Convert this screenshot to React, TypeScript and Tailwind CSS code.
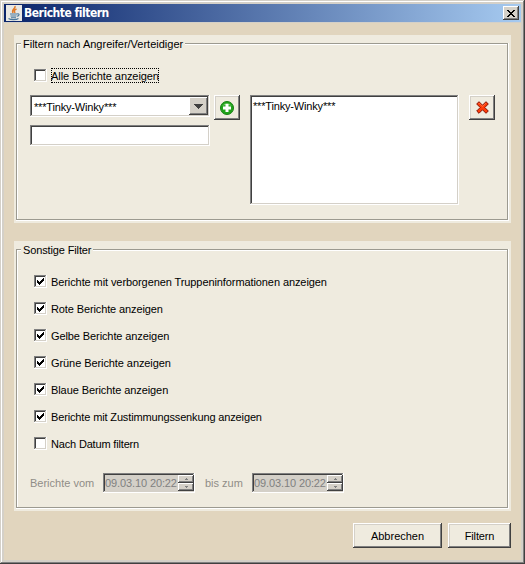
import React from "react";

const raised =
  "shadow-[inset_-1px_-1px_#404040,inset_1px_1px_#fff,inset_-2px_-2px_#808080,inset_2px_2px_#d4d0c8]";
const sunken =
  "shadow-[inset_-1px_-1px_#fff,inset_1px_1px_#808080,inset_-2px_-2px_#d4d0c8,inset_2px_2px_#404040]";

function Check({ label, checked, focus, tracking }: { label: string; checked?: boolean; focus?: boolean; tracking: string }) {
  return (
    <div className="flex h-[15px] items-center gap-1">
      <div className={`flex size-[13px] items-center justify-center bg-white ${sunken}`}>
        {checked && (
          <svg width="7" height="7" viewBox="0 0 7 7" shapeRendering="crispEdges">
            <path d="M0 2h1v1h1v1h1v-1h1v-1h1v-1h1v-1h1v3h-1v1h-1v1h-1v1h-1v1h-1v-1h-1v-1h-1z" />
          </svg>
        )}
      </div>
      <span
        className={`h-[15px] pt-px leading-[14px] ${tracking} ${
          focus ? "outline-1 -outline-offset-1 outline-black outline-dotted" : ""
        }`}
      >
        {label}
      </span>
    </div>
  );
}

function Group({ title, className, children }: { title: string; className: string; children: React.ReactNode }) {
  return (
    <section className={`ml-[10px] w-[497px] bg-[#efebdf] px-[2px] pb-[2px] pt-[2px] ${className}`}>
      <div className="relative h-full">
        <div className="absolute inset-x-0 bottom-0 top-[6px] border-b border-r border-white">
          <div className="h-full border border-[#9c9a90] shadow-[inset_1px_1px_#fff]" />
        </div>
        <div className="relative flex flex-col">
          <h2 className="ml-[5px] h-[14px] w-fit bg-[#efebdf] px-[2px] leading-[14px]">{title}</h2>
          {children}
        </div>
      </div>
    </section>
  );
}

function Arrow({ up }: { up?: boolean }) {
  return (
    <div className={`flex h-[8px] w-[16px] items-center justify-center bg-[#d4d0c8] ${raised}`}>
      <svg width="3" height="2" shapeRendering="crispEdges" fill="#808080">
        <path d={up ? "M1 0h1v1h1v1H0V1h1z" : "M0 0h3v1H2v1H1V1H0z"} />
      </svg>
    </div>
  );
}

function Spinner() {
  return (
    <div className={`flex h-[20px] w-[92px] items-center justify-between bg-[#d4d0c8] pl-[2px] pr-[1px] text-[#808080] ${sunken}`}>
      <span className="w-[72px] tracking-[-0.11px]">09.03.10 20:22</span>
      <div className="flex flex-col">
        <Arrow up />
        <Arrow />
      </div>
    </div>
  );
}

const filters = [
  { label: "Berichte mit verborgenen Truppeninformationen anzeigen", tracking: "tracking-[-0.09px]" },
  { label: "Rote Berichte anzeigen", tracking: "tracking-[-0.12px]" },
  { label: "Gelbe Berichte anzeigen", tracking: "tracking-[-0.1px]" },
  { label: "Grüne Berichte anzeigen", tracking: "tracking-[-0.08px]" },
  { label: "Blaue Berichte anzeigen", tracking: "tracking-[-0.09px]" },
  { label: "Berichte mit Zustimmungssenkung anzeigen", tracking: "tracking-[-0.14px]" },
];

export default function App() {
  return (
    <div className="h-[564px] w-[525px] bg-[#d4d0c8] p-1 font-['Liberation_Sans',Arial,sans-serif] text-[11px] whitespace-nowrap text-black shadow-[inset_-1px_-1px_#404040,inset_1px_1px_#d4d0c8,inset_-2px_-2px_#808080,inset_2px_2px_#fff]">
      <header className="flex h-[18px] items-center bg-linear-to-r/srgb from-[#0a246a] to-[#a6caf0] pl-[2px] pr-[2px]">
        <svg width="16" height="16" viewBox="0 0 16 16" fill="none">
          <rect width="16" height="16" fill="#e9e8e4" />
          <path d="M9 1C10 4 5 4 7 8M10.5 4C8 5 8 6 9 8" stroke="#e07a28" strokeWidth="1.5" />
          <path d="M4 9h7M4.5 11h6M5 12.8h5M11 9c3-1 2.5 2 0 2.2M2.5 13.5c2 1.5 8 1.5 10 0" stroke="#49779b" strokeWidth="1.1" />
        </svg>
        <h1 className="ml-[2px] flex-1 font-['DejaVu_Sans_Condensed','DejaVu_Sans',sans-serif] text-[12px] leading-[18px] font-bold tracking-[-0.48px] text-white">Berichte filtern</h1>
        <button className={`flex h-[14px] w-[16px] items-center justify-center bg-[#d4d0c8] ${raised}`}>
          <svg width="8" height="7" shapeRendering="crispEdges">
            <path d="M0 0h2v1h1v1h2V1h1V0h2v1H7v1H6v1H5v1h1v1h1v1h1v1H6V6H5V5H3v1H2v1H0V6h1V5h1V4h1V3H2V2H1V1H0z" />
          </svg>
        </button>
      </header>
      <main className="mt-px h-[537px] bg-[#e1d5be] pt-[12px]">
        <Group title="Filtern nach Angreifer/Verteidiger" className="h-[188px]">
          <div className="ml-[18px] mt-[17px]">
            <Check label="Alle Berichte anzeigen" focus tracking="tracking-[-0.07px]" />
          </div>
          <div className="ml-[14px] mt-[12px] flex items-start">
            <div className="w-[180px]">
              <div className={`flex h-[22px] items-center justify-between bg-white pl-1 pr-[2px] ${sunken}`}>
                <span className="pt-[2px] tracking-[-0.17px]">***Tinky-Winky***</span>
                <div className={`flex h-[18px] w-[19px] items-center justify-center bg-[#d4d0c8] ${raised}`}>
                  <svg width="9" height="5" shapeRendering="crispEdges">
                    <path d="M0 0h9v1H8v1H7v1H6v1H5v1H4V4H3V3H2V2H1V1H0z" fill="#404040" />
                  </svg>
                </div>
              </div>
              <div className={`mt-[8px] h-[21px] bg-white ${sunken}`} />
            </div>
            <button className={`ml-[4px] flex h-[25px] w-[26px] items-center justify-center bg-[#efebdf] ${raised}`}>
              <svg width="14" height="14" viewBox="0 0 14 14">
                <circle cx="7" cy="7" r="6.5" fill="#20a31a" stroke="#168012" />
                <path d="M2 5Q7-1 12 5Q7 3 2 5" fill="#8bd780" opacity=".7" />
                <path d="M5.5 3h3v2.5H11v3H8.5V11h-3V8.5H3v-3h2.5z" fill="#fff" />
              </svg>
            </button>
            <div className={`ml-[10px] h-[110px] w-[209px] bg-white pl-[3px] pt-[5px] leading-[13px] tracking-[-0.17px] ${sunken}`}>***Tinky-Winky***</div>
            <button className={`ml-[10px] flex h-[25px] w-[26px] items-center justify-center bg-[#efebdf] ${raised}`}>
              <svg width="13" height="13" viewBox="0 0 13 13">
                <path d="M.7 3 3 .7l3.5 3.5L10 .7 12.3 3 8.8 6.5l3.5 3.5-2.3 2.3-3.5-3.5L3 12.3.7 10l3.5-3.5z" fill="#ff3b08" stroke="#871000" />
                <path d="m2.5 3 .8-.8 3.2 3.3L9.800 2.200" fill="none" stroke="#ff7c50" strokeWidth=".7" />
              </svg>
            </button>
          </div>
        </Group>
        <Group title="Sonstige Filter" className="mt-[18px] h-[270px] [&_h2]:tracking-[-0.13px]">
          <div className="ml-[18px] mt-[17px] flex flex-col gap-3">
            {filters.map((f) => (
              <Check key={f.label} label={f.label} tracking={f.tracking} checked />
            ))}
            <Check label="Nach Datum filtern" tracking="tracking-[-0.17px]" />
          </div>
          <div className="ml-[14px] mt-[22px] flex items-center text-[#8f8d87]">
            <span className="w-[73px] pt-px">Berichte vom</span>
            <Spinner />
            <span className="ml-[10px] w-[47px] pt-px">bis zum</span>
            <Spinner />
          </div>
        </Group>
        <footer className="mr-[10px] mt-[12px] flex justify-end gap-[6px]">
          <button className={`h-[25px] w-[89px] bg-[#efebdf] pt-[2px] ${raised}`}>Abbrechen</button>
          <button className={`h-[25px] w-[63px] bg-[#efebdf] pt-[2px] tracking-[-0.15px] ${raised}`}>Filtern</button>
        </footer>
      </main>
    </div>
  );
}
